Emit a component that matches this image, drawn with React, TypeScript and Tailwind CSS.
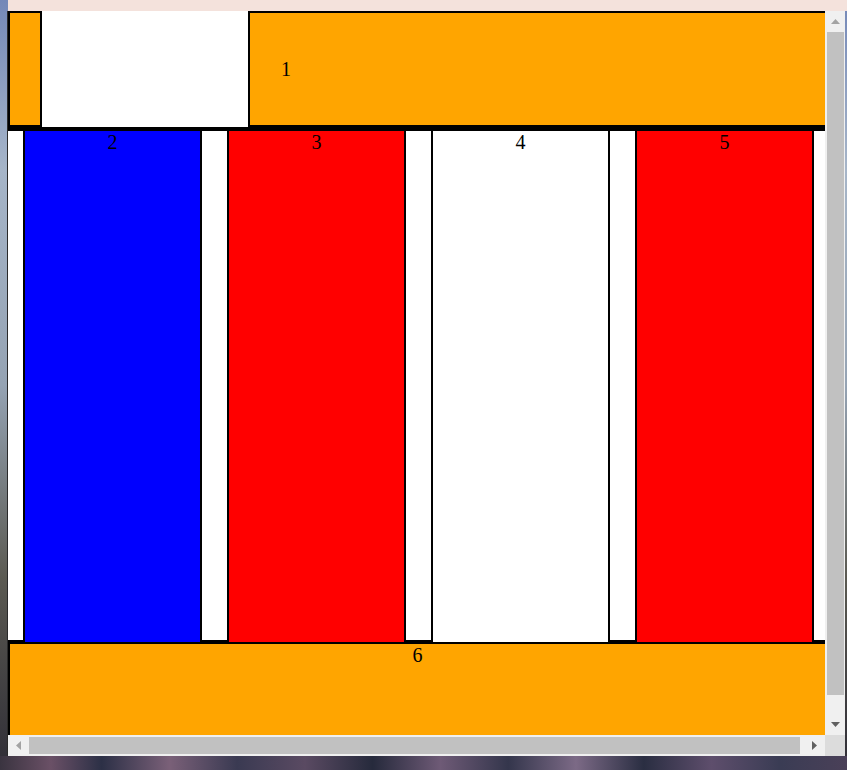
const serif = { fontFamily: '"Liberation Serif", "Times New Roman", serif' };

function Column({ color, label }: { color: string; label: string }) {
  return (
    <div
      className={`h-[515px] w-[179px] shrink-0 border-2 border-black text-center text-[20px] leading-[23px] text-black ${color}`}
    >
      {label}
    </div>
  );
}

function Gap({ width }: { width: string }) {
  return <div className={`h-[513px] shrink-0 border-y-2 border-black bg-white ${width}`} />;
}

function Arrow({ dir, active }: { dir: "up" | "down" | "left" | "right"; active?: boolean }) {
  const points = {
    up: "0,5 4.5,0 9,5",
    down: "0,0 9,0 4.5,5",
    left: "5,0 5,9 0,4.5",
    right: "0,0 0,9 5,4.5",
  }[dir];
  const vertical = dir === "up" || dir === "down";
  return (
    <svg width={vertical ? 9 : 5} height={vertical ? 5 : 9} viewBox={vertical ? "0 0 9 5" : "0 0 5 9"}>
      <polygon points={points} fill={active ? "#606060" : "#a3a3a3"} />
    </svg>
  );
}

export default function App() {
  return (
    <div
      className="flex h-[770px] w-[847px] flex-col overflow-hidden bg-[linear-gradient(180deg,#7488b8_0%,#a6b5c8_22%,#95a3b3_50%,#5b5a52_75%,#2f2d36_100%)]"
      style={serif}
    >
      <div className="ml-[8px] h-[11px] shrink-0 bg-[#f4e2dc]" />
      <div className="ml-[7px] grid w-[838px] shrink-0 grid-cols-[817px_20px] grid-rows-[724px_21px] border-l border-[#2a2a2a] bg-[#f0f0f0]">
        {/* page viewport */}
        <div className="overflow-hidden bg-white">
          <div className="w-[831px]">
            <div className="flex h-[116px]">
              <div className="w-[34px] shrink-0 border-2 border-black bg-[#ffa500]" />
              <div className="w-[206px] shrink-0" />
              <div className="flex flex-1 items-center border-2 border-black bg-[#ffa500] pl-[31px] text-[20px] leading-[23px] text-black">
                1
              </div>
            </div>
            <div className="flex h-[515px] items-start border-t-2 border-black">
              <Gap width="w-[15px]" />
              <Column color="bg-[#0000ff]" label="2" />
              <Gap width="w-[25px]" />
              <Column color="bg-[#ff0000]" label="3" />
              <Gap width="w-[25px]" />
              <Column color="bg-white" label="4" />
              <Gap width="w-[25px]" />
              <Column color="bg-[#ff0000]" label="5" />
              <Gap width="w-[25px]" />
            </div>
            <div className="h-[120px] w-[819px] border-x-2 border-t-2 border-black bg-[#ffa500] text-center text-[20px] leading-[23px] text-black">
              6
            </div>
          </div>
        </div>

        {/* vertical scrollbar */}
        <div className="flex flex-col pl-[2px] pr-[1px]">
          <div className="flex h-[21px] items-center justify-center">
            <Arrow dir="up" />
          </div>
          <div className="h-[663px] bg-[#c1c1c1]" />
          <div className="flex-1" />
          <div className="flex h-[21px] items-center justify-center">
            <Arrow dir="down" active />
          </div>
        </div>

        {/* horizontal scrollbar */}
        <div className="flex items-stretch py-[2px]">
          <div className="flex w-[21px] items-center justify-center">
            <Arrow dir="left" />
          </div>
          <div className="w-[771px] bg-[#c1c1c1]" />
          <div className="flex-1" />
          <div className="flex w-[21px] items-center justify-center">
            <Arrow dir="right" active />
          </div>
        </div>

        <div className="bg-[#dcdcdc]" />
      </div>
      {/* desktop wallpaper below the window */}
      <div className="flex-1 bg-[linear-gradient(90deg,#3a3440_0%,#6a5066_6%,#2c3046_12%,#7a6078_20%,#3a3a52_28%,#5a4a62_36%,#262a3c_44%,#6e5a76_52%,#34364c_60%,#7c6a86_68%,#2a2e42_76%,#5e4e6c_84%,#3a3c54_92%,#4a4058_100%)]" />
    </div>
  );
}
